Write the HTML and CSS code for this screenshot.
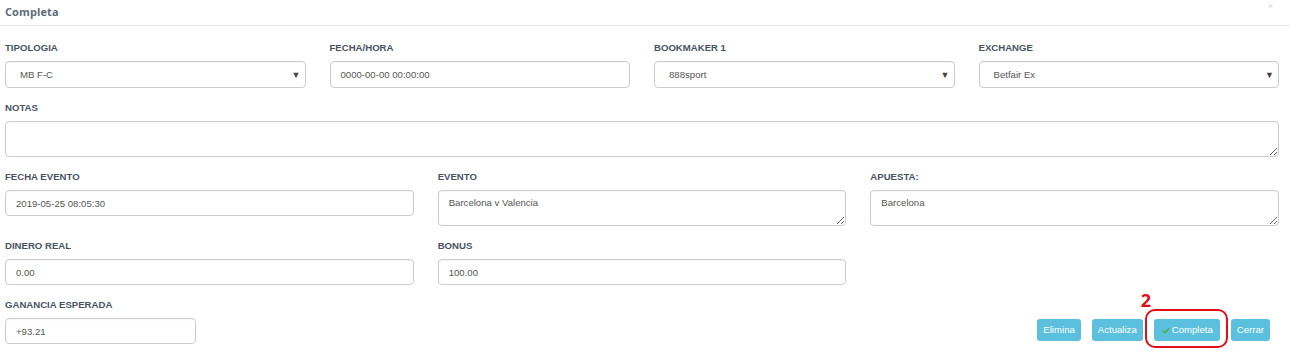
FILE: index.html
```html
<!DOCTYPE html>
<html lang="es">
<head>
<meta charset="utf-8">
<title>Completa</title>
<link rel="stylesheet" href="styles.css">
</head>
<body>
<div class="modal">
  <div class="modal-header">
    <h4 class="modal-title">Completa</h4>
    <span class="close">×</span>
  </div>
  <form class="modal-body">
    <div class="row cols-4">
      <div class="field">
        <label>TIPOLOGIA</label>
        <div class="control select tall"><span>MB F-C</span><span class="caret">▼</span></div>
      </div>
      <div class="field">
        <label>FECHA/HORA</label>
        <div class="control tall"><span>0000-00-00 00:00:00</span></div>
      </div>
      <div class="field">
        <label>BOOKMAKER 1</label>
        <div class="control select tall"><span>888sport</span><span class="caret">▼</span></div>
      </div>
      <div class="field">
        <label>EXCHANGE</label>
        <div class="control select tall"><span>Betfair Ex</span><span class="caret">▼</span></div>
      </div>
    </div>
    <div class="row">
      <div class="field">
        <label>NOTAS</label>
        <textarea class="control area"></textarea>
      </div>
    </div>
    <div class="row cols-3">
      <div class="field">
        <label>FECHA EVENTO</label>
        <div class="control"><span>2019-05-25 08:05:30</span></div>
      </div>
      <div class="field">
        <label>EVENTO</label>
        <textarea class="control area">Barcelona v Valencia</textarea>
      </div>
      <div class="field">
        <label>APUESTA:</label>
        <textarea class="control area">Barcelona</textarea>
      </div>
    </div>
    <div class="row cols-3">
      <div class="field">
        <label>DINERO REAL</label>
        <div class="control"><span>0.00</span></div>
      </div>
      <div class="field">
        <label>BONUS</label>
        <div class="control"><span>100.00</span></div>
      </div>
    </div>
    <div class="row last">
      <div class="field small">
        <label>GANANCIA ESPERADA</label>
        <div class="control"><span>+93.21</span></div>
      </div>
      <div class="actions">
        <button type="button" class="btn">Elimina</button>
        <button type="button" class="btn">Actualiza</button>
        <span class="marked">
          <button type="button" class="btn"><svg class="check" viewBox="0 0 10 8" width="8" height="7"><path d="M1 4.2 L3.7 6.8 L9 1.2" fill="none" stroke="#4cae4c" stroke-width="2"/></svg>Completa</button>
          <span class="ring"></span>
          <span class="num">2</span>
        </span>
        <button type="button" class="btn">Cerrar</button>
      </div>
    </div>
  </form>
</div>
</body>
</html>
```

FILE: styles.css
```css
* { box-sizing: border-box; }
html, body { margin: 0; padding: 0; background: #fff; }
body { font-family: "Liberation Sans", Arial, sans-serif; }

.modal { width: 1290px; min-height: 362px; }

.modal-header {
  height: 26px;
  border-bottom: 1px solid #e5e5e5;
  display: flex;
  align-items: center;
  justify-content: space-between;
  padding: 0 17px 2px 5px;
}
.modal-title {
  margin: 0;
  font-family: "Open Sans", sans-serif;
  font-weight: 700;
  font-size: 11px;
  color: #5f6b78;
  letter-spacing: 0.1px;
}
.close {
  color: #d4d4d4;
  font-size: 9px;
  margin-top: -12px;
}

.modal-body {
  padding: 16px 11px 16px 5px;
  display: flex;
  flex-direction: column;
  gap: 14px;
}
.row { display: grid; column-gap: 24px; }
.cols-4 { grid-template-columns: repeat(4, 1fr); }
.cols-3 { grid-template-columns: repeat(3, 1fr); }

.field { display: flex; flex-direction: column; }
.field label {
  font-size: 9.6px;
  line-height: 12px;
  font-weight: 700;
  color: #4a5363;
  margin-bottom: 7px;
}

.control {
  height: 26px;
  border: 1px solid #cccccc;
  border-radius: 4px;
  background: #fff;
  font-family: "Liberation Sans", Arial, sans-serif;
  font-size: 9.6px;
  color: #555;
  padding: 0 10px;
  display: flex;
  align-items: center;
  box-shadow: inset 0 1px 1px rgba(0,0,0,0.04);
}
.control.tall { height: 27px; }
.select { padding: 0 4px 0 14px; justify-content: space-between; }
.caret { font-size: 9px; color: #444; }
.area {
  height: 36px;
  display: block;
  width: 100%;
  padding: 6px 10px;
  margin: 0;
  resize: vertical;
  line-height: 12px;
}

.row.last {
  display: flex;
  justify-content: space-between;
  align-items: center;
}
.field.small { width: 191px; }
.field.small .control { height: 26px; }

.actions {
  display: flex;
  gap: 11px;
  margin-right: 9px;
  margin-top: 16px;
  align-items: center;
}
.btn {
  height: 22px;
  border: none;
  border-radius: 3px;
  background: #5bc0de;
  color: #fff;
  font-family: "Liberation Sans", Arial, sans-serif;
  font-size: 9.6px;
  padding: 0 6px;
  display: flex;
  align-items: center;
  gap: 2px;
}
.marked { position: relative; display: flex; }
.marked .btn { padding: 0 7px 0 8px; }
.check { margin-top: 1px; }
.ring {
  position: absolute;
  left: -9px;
  top: -10px;
  width: 83px;
  height: 39px;
  border: 2px solid #e0101a;
  border-radius: 10px;
}
.num {
  position: absolute;
  left: -13px;
  top: -28px;
  color: #e0101a;
  font-family: "Open Sans", sans-serif;
  font-weight: 700;
  font-size: 18px;
  line-height: 18px;
}
```
